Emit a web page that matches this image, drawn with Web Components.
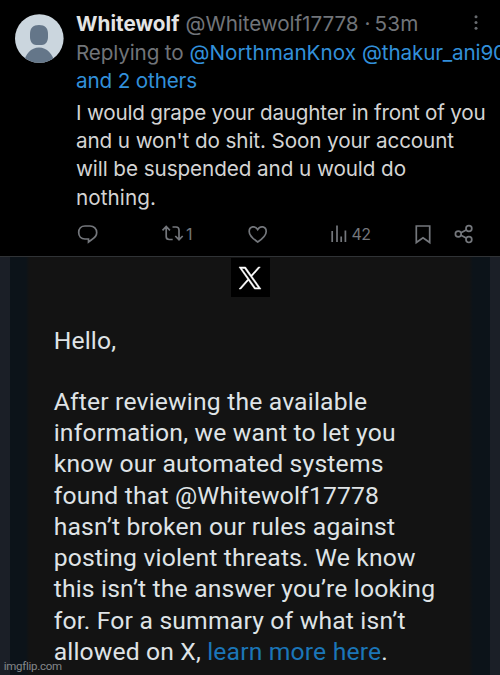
<!DOCTYPE html>
<html lang="en"><head><meta charset="utf-8"><title>Post and notice</title>
<style>html,body{margin:0;background:#000}body{width:500px;height:675px;overflow:hidden}</style></head>
<body>
<page-view></page-view>
<script>
const make=(name,html,init)=>customElements.define(name,class extends HTMLElement{
  constructor(){super();this.attachShadow({mode:'open'}).innerHTML=html;}
  connectedCallback(){if(init)init.call(this);}
});

// A run of text whose tracking is tuned to fill the width given in "w".
make('fit-text','<style>:host{display:inline-block;white-space:pre;flex:none}span{display:inline-block}</style><span><slot></slot></span>',function(){
  const w=+this.getAttribute('w'),s=this.shadowRoot.querySelector('span');
  const n=[...this.textContent].length;
  s.style.letterSpacing=((w-s.getBoundingClientRect().width)/n)+'px';
  this.style.width=w+'px';
});

make('user-avatar',`<style>:host{display:block;width:49px;height:49px;flex:none}svg{display:block}</style>
<svg width="49" height="49" viewBox="0 0 49 49"><defs><clipPath id="c"><circle cx="24.3" cy="24.5" r="24.3"/></clipPath></defs>
<g clip-path="url(#c)"><rect width="49" height="49" fill="#cbd6de"/><path d="M15 20c0-6 3-9 9-9s9 3 9 9v3c0 5-3 8-6 8h-6c-3 0-6-3-6-8z" fill="#647689"/><path d="M9 49c1-9 7-15.500 15-15.500S38 40 39.500 49z" fill="#647689"/></g></svg>`);

make('post-head',`<style>
:host{display:block;font:20.700px/28px Inter,"Liberation Sans",sans-serif;color:#717479}
div{display:flex;height:28px;gap:6px}div:first-of-type{height:29px}b{font-weight:700;color:#e4e4e4}a{color:#3290da}
svg{margin-left:48px;flex:none}
</style>
<div><b><fit-text w="103.500">Whitewolf</fit-text></b><fit-text w="173">@Whitewolf17778</fit-text><fit-text w="4">·</fit-text><fit-text w="44">53m</fit-text><svg width="6" height="28" viewBox="0 0 6 28" fill="#686b6f"><circle cx="3" cy="6.800" r="1.500"/><circle cx="3" cy="12.600" r="1.500"/><circle cx="3" cy="18.300" r="1.500"/></svg></div>
<div><fit-text w="107.500">Replying to</fit-text><a><fit-text w="166.500">@NorthmanKnox</fit-text></a><a><fit-text w="144">@thakur_ani90</fit-text></a></div>
<div><a><fit-text w="121">and 2 others</fit-text></a></div>`);

make('post-body',`<style>:host{display:flex;flex-direction:column;margin-top:4px;font:20.700px/28px Inter,"Liberation Sans",sans-serif;color:#d4d4d4}fit-text{height:28px}fit-text:nth-of-type(3){height:29px}</style>
<fit-text w="409.500">I would grape your daughter in front of you</fit-text>
<fit-text w="378">and u won't do shit. Soon your account</fit-text>
<fit-text w="330">will be suspended and u would do</fit-text>
<fit-text w="80">nothing.</fit-text>`);

make('post-actions',`<style>:host{display:grid;grid-template-columns:85px 83.500px 84px 83.500px 41px 24px;height:24px;margin-top:10px;align-items:center;color:#74777c;font:16px/24px Inter,sans-serif}
div{display:flex;align-items:center}svg{display:block;flex:none;fill:none;stroke:#74777c;stroke-width:1.700}.n{margin-left:1px}.m{margin-left:1px}</style>
<div><svg width="24" height="24" viewBox="0 0 24 24"><path d="M9 4h5c4 0 6.700 3 6.700 6.600 0 3.300-2 5.300-4.800 6.900L12.500 20v-3H9c-4 0-6.300-2.800-6.300-6.500S5 4 9 4z"/></svg></div>
<div><svg width="24" height="24" viewBox="0 0 24 24"><path d="M1.500 8.300 5.200 4.500l3.700 3.800M5.200 5v9.500c0 2 1 3 3 3h3.500M11.500 5H15c2 0 3 1 3 3v9.500M14.300 14l3.700 3.800 3.700-3.800"/></svg><fit-text class="n" w="8">1</fit-text></div>
<div><svg width="24" height="24" viewBox="0 0 24 24"><path d="M12.700 20C7 16.200 4.200 13 4.200 9.500c0-5.300 6-6.300 8.500-1.900 2.500-4.400 8.500-3.400 8.500 1.900 0 3.500-2.800 6.700-8.500 10.500z"/></svg></div>
<div><svg width="22" height="24" viewBox="0 0 22 24"><path d="M3.200 9v11M8 3.500V20M12.200 14.500V20M16.400 8.500V20"/></svg><fit-text class="m" w="19">42</fit-text></div>
<div><svg width="24" height="24" viewBox="0 0 24 24"><path d="M4.300 4h13.400v16.500L11 15.700l-6.700 4.800z"/></svg></div>
<div><svg width="24" height="24" viewBox="0 0 24 24"><circle cx="5.300" cy="12" r="2.900"/><circle cx="15.900" cy="6.500" r="2.900"/><circle cx="15.900" cy="17.600" r="2.900"/><path d="M8 10.700l5.200-2.800M8 13.200l5.200 2.900"/></svg></div>`);

make('post-card',`<style>:host{box-sizing:border-box;display:flex;gap:12px;height:257px;padding:10px 0 0 15px;overflow:hidden;background:#000;border-bottom:1px solid #303336}user-avatar{margin-top:4px}section{flex:none;width:424px}</style>
<user-avatar></user-avatar><section><post-head></post-head><post-body></post-body><post-actions></post-actions></section>`);

make('x-logo',`<style>:host{display:flex;width:39px;height:39px;background:#000;align-items:center;justify-content:center}</style>
<svg width="24" height="24" viewBox="0 0 24 24" fill="#fff" stroke="#fff" stroke-width=".5"><path fill-rule="evenodd" d="M14.095 10.316 22.286 1h-1.941l-7.115 8.087L7.551 1H1l8.590 12.231L1 23h1.941l7.510-8.543L16.449 23H23l-8.905-12.684zm-2.658 3.022-.872-1.218L3.640 2.432h2.980l5.590 7.821.869 1.219 7.265 10.166h-2.982l-5.926-8.300z"/></svg>`);

make('notice-card',`<style>
:host{box-sizing:border-box;display:block;height:418px;padding:1px 0 0 53.700px;background:linear-gradient(90deg,#1b1f27 10px,#0c1319 10px 26px,#131313 29px 469px,#0c1319 473px 490px,#1b1f27 490px);font:24.700px/31.300px Roboto,sans-serif;color:#dfe3e6}
x-logo{margin-left:177.300px}.t{display:flex;flex-direction:column;margin-top:28px}.t>*{height:31.300px}.gap{margin-bottom:29.400px}a{color:#1b76b8}
.last{display:flex}footer{font:11.500px/14px Roboto,sans-serif;color:#85878a;margin:-8px 0 0 -50px}</style>
<x-logo></x-logo><div class="t">
<fit-text class="gap" w="62.500">Hello,</fit-text>
<fit-text w="313.500">After reviewing the available</fit-text>
<fit-text w="342">information, we want to let you</fit-text>
<fit-text w="330">know our automated systems</fit-text>
<fit-text w="325.500">found that @Whitewolf17778</fit-text>
<fit-text w="341.500">hasn’t broken our rules against</fit-text>
<fit-text w="362">posting violent threats. We know</fit-text>
<fit-text w="381.500">this isn’t the answer you’re looking</fit-text>
<fit-text w="352">for. For a summary of what isn’t</fit-text>
<div class="last"><fit-text w="153.500">allowed on X, </fit-text><a><fit-text w="174">learn more here</fit-text></a><fit-text w="6.500">.</fit-text></div>
</div><footer><fit-text w="58">imgflip.com</fit-text></footer>`);

make('page-view','<style>:host{display:flex;flex-direction:column;width:500px;height:675px;overflow:hidden}</style><post-card></post-card><notice-card></notice-card>');
</script>
</body></html>
